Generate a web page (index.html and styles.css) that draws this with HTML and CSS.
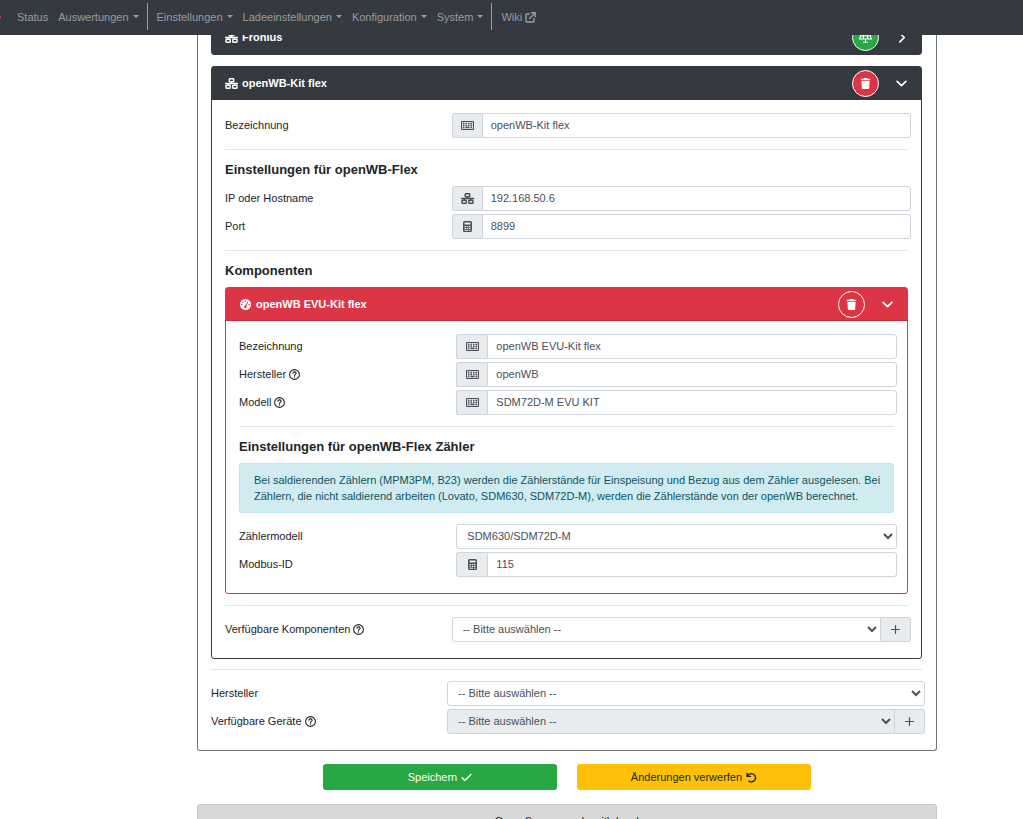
FILE: index.html
```html
<!DOCTYPE html>
<html lang="de">
<head>
<meta charset="utf-8">
<meta name="viewport" content="width=device-width, initial-scale=1">
<title>openWB – Geräte und Komponenten</title>
<link rel="stylesheet" href="styles.css">
</head>
<body>
<svg class="sprite" aria-hidden="true">
  <symbol id="network" viewBox="0 0 26 22"><g fill="none" stroke="currentColor" stroke-width="2.800"><rect x="8.500" y="1.500" width="9" height="6" rx="1"/><rect x="2" y="14.500" width="8.500" height="6" rx="1"/><rect x="15.500" y="14.500" width="8.500" height="6" rx="1"/><path d="M0 11h26M13 7.500V11M6.500 11v3.500M19.500 11v3.500"/></g></symbol>
  <symbol id="keyboard" viewBox="0 0 26 18"><rect x="1" y="1" width="24" height="16" rx="2.500" fill="none" stroke="currentColor" stroke-width="2.400"/><path d="M4 5h3M9 5h3M14 5h3M19 5h3M4 9h3M9 9h3M14 9h3M19 9h3M4 13h3M9 13h8M19 13h3" stroke="currentColor" stroke-width="3"/></symbol>
  <symbol id="calculator" viewBox="0 0 18 22"><path fill="currentColor" fill-rule="evenodd" d="M3 0h12a3 3 0 0 1 3 3v16a3 3 0 0 1-3 3H3a3 3 0 0 1-3-3V3a3 3 0 0 1 3-3zM3 3v4h12V3zM3 10v2.500h3V10zM7.500 10v2.500h3V10zM12 10v2.500h3V10zM3 14v2h3v-2zM7.500 14v2h3v-2zM12 14v2h3v-2zM3 17.500v2h7.500v-2zM12 17.500v2h3v-2z"/></symbol>
  <symbol id="trash" viewBox="0 0 448 512"><path fill="currentColor" d="M135.200 17.700L128 32 32 32C14.300 32 0 46.300 0 64S14.300 96 32 96l384 0c17.700 0 32-14.300 32-32s-14.300-32-32-32l-96 0-7.200-14.300C307.400 6.800 296.300 0 284.200 0L163.800 0c-12.100 0-23.200 6.800-28.600 17.700zM416 128L32 128 53.200 467c1.600 25.300 22.600 45 47.900 45l245.800 0c25.300 0 46.300-19.700 47.900-45L416 128z"/></symbol>
  <symbol id="solar" viewBox="0 0 26 22"><path fill="none" stroke="currentColor" stroke-width="2.400" d="M4.500 1.500h17L24.500 14h-23zM3 7.500h20M9.500 1.500L8.500 14M16.500 1.500l1 12.500M13 14v6M8 20.500h10"/></symbol>
  <symbol id="question" viewBox="0 0 22 22"><g fill="none" stroke="currentColor" stroke-width="2.200"><circle cx="11" cy="11" r="9.800"/><path d="M7.800 8.600a3.200 2.700 0 1 1 4.600 2.300Q11 11.600 11 13.200" stroke-linecap="round"/></g><circle cx="11" cy="16" r="1.400" fill="currentColor"/></symbol>
  <symbol id="gauge" viewBox="0 0 22 22"><circle cx="11" cy="11" r="11" fill="currentColor"/><g fill="#dc3545"><circle cx="11" cy="4" r="1.500"/><circle cx="6" cy="6.200" r="1.500"/><circle cx="3.800" cy="11.200" r="1.500"/><circle cx="18.200" cy="11.200" r="1.500"/><circle cx="11" cy="15.500" r="2.600"/><path d="M15 5l1.600 1-4.600 9-1.800-1z"/></g></symbol>
  <symbol id="down" viewBox="0 0 20 20"><path d="M2 6l8 8 8-8" fill="none" stroke="currentColor" stroke-width="3" stroke-linecap="round" stroke-linejoin="round"/></symbol>
  <symbol id="right" viewBox="0 0 20 20"><path d="M7 2l8 8-8 8" fill="none" stroke="currentColor" stroke-width="3" stroke-linecap="round" stroke-linejoin="round"/></symbol>
  <symbol id="plus" viewBox="0 0 22 22"><path d="M11 3v16M3 11h16" fill="none" stroke="currentColor" stroke-width="2.400" stroke-linecap="round"/></symbol>
  <symbol id="check" viewBox="0 0 20 20"><path d="M2 10.500l5 5L18 4.500" fill="none" stroke="currentColor" stroke-width="2.600" stroke-linecap="round" stroke-linejoin="round"/></symbol>
  <symbol id="undo" viewBox="0 0 20 20"><path d="M2 2v6h6M3 7.500A7.500 7.500 0 1 1 5.500 16.500" fill="none" stroke="currentColor" stroke-width="2.600" stroke-linecap="round" stroke-linejoin="round"/></symbol>
  <symbol id="external" viewBox="0 0 22 22"><path d="M9 4H3.500Q2 4 2 5.500V18.500Q2 20 3.500 20h13Q18 20 18 18.500V13M13 1.500h7.500V9M20 2L9 13" fill="none" stroke="currentColor" stroke-width="2.800" stroke-linecap="round" stroke-linejoin="round"/></symbol>
</svg>

<nav class="navbar">
  <span class="brand-tip"></span>
  <a class="nav-link" href="#">Status</a>
  <a class="nav-link dropdown" href="#">Auswertungen</a>
  <span class="nav-divider"></span>
  <a class="nav-link dropdown" href="#">Einstellungen</a>
  <a class="nav-link dropdown" href="#">Ladeeinstellungen</a>
  <a class="nav-link dropdown" href="#">Konfiguration</a>
  <a class="nav-link dropdown" href="#">System</a>
  <span class="nav-divider"></span>
  <a class="nav-link" href="#">Wiki <svg class="icon"><use href="#external"/></svg></a>
</nav>

<main class="page">
  <form>
    <section class="panel">
      <section class="card">
        <header class="card-header">
          <svg class="icon icon-wide"><use href="#network"/></svg>
          <span class="card-title">Fronius</span>
          <span class="badge badge-green"><svg class="icon icon-wide"><use href="#solar"/></svg></span>
          <button type="button" class="toggle" aria-label="Aufklappen"><svg class="icon"><use href="#right"/></svg></button>
        </header>
      </section>

      <section class="card">
        <header class="card-header">
          <svg class="icon icon-wide"><use href="#network"/></svg>
          <span class="card-title">openWB-Kit flex</span>
          <button type="button" class="badge" aria-label="Gerät löschen"><svg class="icon"><use href="#trash"/></svg></button>
          <button type="button" class="toggle" aria-label="Zuklappen"><svg class="icon"><use href="#down"/></svg></button>
        </header>
        <div class="card-body">
          <div class="row">
            <label for="dev-name">Bezeichnung</label>
            <div class="group"><span class="addon"><svg class="icon icon-key"><use href="#keyboard"/></svg></span><input id="dev-name" type="text" value="openWB-Kit flex"></div>
          </div>
          <hr>
          <h2>Einstellungen für openWB-Flex</h2>
          <div class="row">
            <label for="dev-ip">IP oder Hostname</label>
            <div class="group"><span class="addon"><svg class="icon icon-wide"><use href="#network"/></svg></span><input id="dev-ip" type="text" value="192.168.50.6"></div>
          </div>
          <div class="row">
            <label for="dev-port">Port</label>
            <div class="group"><span class="addon"><svg class="icon"><use href="#calculator"/></svg></span><input id="dev-port" type="text" inputmode="numeric" value="8899"></div>
          </div>
          <hr>
          <h2>Komponenten</h2>

          <section class="card card-red">
            <header class="card-header">
              <svg class="icon icon-wide"><use href="#gauge"/></svg>
              <span class="card-title">openWB EVU-Kit flex</span>
              <button type="button" class="badge" aria-label="Komponente löschen"><svg class="icon"><use href="#trash"/></svg></button>
              <button type="button" class="toggle" aria-label="Zuklappen"><svg class="icon"><use href="#down"/></svg></button>
            </header>
            <div class="card-body">
              <div class="row">
                <label for="comp-name">Bezeichnung</label>
                <div class="group"><span class="addon"><svg class="icon icon-key"><use href="#keyboard"/></svg></span><input id="comp-name" type="text" value="openWB EVU-Kit flex"></div>
              </div>
              <div class="row">
                <label for="comp-vendor">Hersteller <svg class="icon"><use href="#question"/></svg></label>
                <div class="group"><span class="addon"><svg class="icon icon-key"><use href="#keyboard"/></svg></span><input id="comp-vendor" type="text" value="openWB"></div>
              </div>
              <div class="row">
                <label for="comp-model">Modell <svg class="icon"><use href="#question"/></svg></label>
                <div class="group"><span class="addon"><svg class="icon icon-key"><use href="#keyboard"/></svg></span><input id="comp-model" type="text" value="SDM72D-M EVU KIT"></div>
              </div>
              <hr>
              <h2>Einstellungen für openWB-Flex Zähler</h2>
              <p class="alert">Bei saldierenden Zählern (MPM3PM, B23) werden die Zählerstände für Einspeisung und Bezug aus dem Zähler ausgelesen. Bei Zählern, die nicht saldierend arbeiten (Lovato, SDM630, SDM72D-M), werden die Zählerstände von der openWB berechnet.</p>
              <div class="row">
                <label for="meter">Zählermodell</label>
                <div class="group"><select id="meter"><option>SDM630/SDM72D-M</option></select></div>
              </div>
              <div class="row">
                <label for="modbus">Modbus-ID</label>
                <div class="group"><span class="addon"><svg class="icon"><use href="#calculator"/></svg></span><input id="modbus" type="text" inputmode="numeric" value="115"></div>
              </div>
            </div>
          </section>

          <hr>
          <div class="row">
            <label for="add-comp">Verfügbare Komponenten <svg class="icon"><use href="#question"/></svg></label>
            <div class="group"><select id="add-comp"><option>-- Bitte auswählen --</option></select><button type="button" class="addon addon-end" aria-label="Komponente hinzufügen"><svg class="icon"><use href="#plus"/></svg></button></div>
          </div>
        </div>
      </section>

      <hr>
      <div class="row">
        <label for="vendor">Hersteller</label>
        <div class="group"><select id="vendor"><option>-- Bitte auswählen --</option></select></div>
      </div>
      <div class="row">
        <label for="add-dev">Verfügbare Geräte <svg class="icon"><use href="#question"/></svg></label>
        <div class="group"><select id="add-dev" disabled><option>-- Bitte auswählen --</option></select><button type="button" class="addon addon-end" aria-label="Gerät hinzufügen"><svg class="icon"><use href="#plus"/></svg></button></div>
      </div>
    </section>

    <div class="actions">
      <button type="button" class="btn btn-save">Speichern <svg class="icon"><use href="#check"/></svg></button>
      <button type="button" class="btn btn-reset">Änderungen verwerfen <svg class="icon"><use href="#undo"/></svg></button>
    </div>
  </form>
  <footer class="footer">Open Source made with love!</footer>
</main>
</body>
</html>
```
FILE: styles.css
```css
* { box-sizing: border-box; }

html { overflow: hidden; }

body {
  margin: 0;
  background: #fff;
  color: #212529;
  font-family: "Liberation Sans", Arial, sans-serif;
  font-size: 11px;
  line-height: 16px;
}

button, input, select { font: inherit; margin: 0; }

.sprite { position: absolute; width: 0; height: 0; }

.icon {
  width: 11px;
  height: 11px;
  flex: none;
  vertical-align: -2px;
}
.icon-wide { width: 13px; }
.icon-key { width: 13px; height: 9px; }

/* navigation */
.navbar {
  position: fixed;
  top: 0;
  left: 0;
  right: 0;
  z-index: 10;
  display: flex;
  align-items: center;
  height: 35px;
  padding-bottom: 2px;
  background: #343a40;
}
.brand-tip {
  width: 1px;
  height: 2px;
  margin-right: 11px;
  background: #dc3545;
}
.nav-link {
  padding: 0 5px;
  color: #999c9f;
  text-decoration: none;
  white-space: nowrap;
}
.nav-link.dropdown::after {
  content: "";
  display: inline-block;
  margin-left: 4px;
  vertical-align: 3px;
  border-top: 3px solid;
  border-left: 3px solid transparent;
  border-right: 3px solid transparent;
}
.nav-divider {
  width: 1px;
  height: 27px;
  margin: 0 4px 0 3px;
  background: #999c9f;
}

/* layout */
.page { padding: 0 86px 0 197px; }

.panel {
  padding: 20px 14px 13px 13px;
  border: 1px solid #6c757d;
  border-top: 0;
  border-radius: 0 0 3px 3px;
}

.card {
  margin-bottom: 10px;
  border: 1px solid #343a40;
  border-radius: 3px;
}
.card + .card { margin-top: 11px; }
.card-header {
  display: flex;
  align-items: center;
  height: 33px;
  padding: 0 14px 1px 13px;
  background: #343a40;
  color: #fff;
  font-weight: bold;
}
.card-title { flex: 1; margin-left: 4px; padding-bottom: 1px; }
.card-body { padding: 13px; }
.card-red { border-color: #dc3545; }
.card-red .card-header {
  padding-bottom: 0;
  background: #dc3545;
  border-bottom: 1px solid #c62f3e;
}

.badge {
  display: flex;
  align-items: center;
  justify-content: center;
  width: 27px;
  height: 27px;
  margin-right: 17px;
  padding: 0;
  border: 1px solid #fff;
  border-radius: 50%;
  background: #dc3545;
  color: #fff;
}
.badge-green { background: #28a745; }
.toggle {
  display: flex;
  padding: 0;
  border: 0;
  background: none;
  color: #fff;
}

hr {
  height: 1px;
  margin: 11px 0;
  border: 0;
  background: #e5e5e5;
}
.panel > hr { margin-top: 10px; }
h2 {
  margin: 0 0 7px;
  font-size: 13px;
  line-height: 18px;
}

/* form rows */
.row {
  display: grid;
  grid-template-columns: 1fr 2fr;
  align-items: center;
  margin: 0 -3px 3px;
}
.row label { padding: 0 0 2px 3px; }
.group { display: flex; height: 25px; }
.group input, .group select {
  flex: 1;
  min-width: 0;
  border: 1px solid #ced4da;
  border-radius: 3px;
  background: #fff;
  color: #495057;
  opacity: 1;
}
.group input { padding: 0 8px 2px; }
.group select { padding: 0 0 2px 6px; }
.group select:disabled { background: #e9ecef; }
.addon {
  display: flex;
  align-items: center;
  justify-content: center;
  width: 30px;
  padding: 0;
  border: 1px solid #ced4da;
  border-right: 0;
  border-radius: 3px 0 0 3px;
  background: #e9ecef;
  color: #495057;
}
.card-red .addon { width: 31px; }
.addon + input { border-radius: 0 3px 3px 0; }
.addon-end {
  border-right: 1px solid #ced4da;
  border-left: 0;
  border-radius: 0 3px 3px 0;
}
.group select:not(:last-child) { border-radius: 3px 0 0 3px; }

.alert {
  margin: 0 0 11px;
  padding: 8px 10px 8px 14px;
  border: 1px solid #bee5eb;
  border-radius: 3px;
  background: #d1ecf1;
  color: #0c5460;
}

/* actions and footer */
.actions {
  display: grid;
  grid-template-columns: 1fr 1fr;
  gap: 20px;
  padding: 13px 126px 14px;
}
.btn {
  height: 26px;
  padding: 0;
  border: 0;
  border-radius: 3px;
}
.btn .icon { margin-left: 1px; }
.btn-save { background: #28a745; color: #fff; }
.btn-reset { background: #ffc107; color: #212529; }
.footer {
  padding: 8px 13px;
  border: 1px solid #c6c8ca;
  border-radius: 3px;
  background: #d6d8d9;
  text-align: center;
}
```
